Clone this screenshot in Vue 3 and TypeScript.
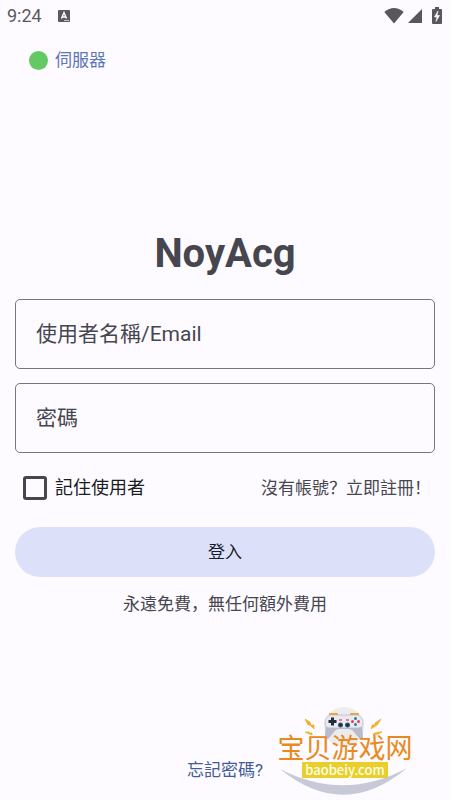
<script setup lang="ts">
import { ref } from 'vue'

const username = ref('')
const password = ref('')
const remember = ref(false)
</script>

<template>
  <div class="screen" lang="zh-Hans">
    <div class="status">
      <span class="clock">9:24</span>
      <svg class="app-badge" viewBox="0 0 12 12" width="12" height="12" aria-hidden="true">
        <rect width="12" height="12" rx="1" fill="#5b595d" />
        <path d="M3.5 8.5 6 2.5l2.5 6M4.5 7h3" fill="none" stroke="#fff" stroke-width="1.4" />
        <path d="M6 10.5h5" stroke="#c9c7cb" stroke-width="1" />
      </svg>
      <div class="signals">
        <svg viewBox="0 0 20 16" width="20" height="16" aria-hidden="true">
          <path d="M0.3 4Q10-4 19.7 4L10 15.5Z" fill="#59575b" />
        </svg>
        <svg viewBox="0 0 16 16" width="16" height="16" aria-hidden="true">
          <path d="M15 1v14H1Z" fill="#59575b" />
        </svg>
        <svg class="battery" viewBox="0 0 10 17" width="10" height="17" aria-hidden="true">
          <path d="M3 0h4v2h2q1 0 1 1v13q0 1-1 1H1q-1 0-1-1V3q0-1 1-1h2Z" fill="#59575b" />
          <path d="M6 4 2.500 10H5l-1 4.500L7.500 8.500H5Z" fill="#fff" stroke="#fff" stroke-width=".6" />
        </svg>
      </div>
    </div>

    <button class="server" type="button"><span class="dot"></span>伺服器</button>

    <form class="login" @submit.prevent>
      <h1>NoyAcg</h1>
      <input v-model="username" class="field" type="text" placeholder="使用者名稱/Email" aria-label="使用者名稱/Email" />
      <input v-model="password" class="field" type="password" placeholder="密碼" aria-label="密碼" />
      <div class="options">
        <label class="remember"><input v-model="remember" type="checkbox" />記住使用者</label>
        <a class="register" href="#register">沒有帳號？立即註冊！</a>
      </div>
      <button class="submit" type="submit">登入</button>
      <p class="note">永遠免費，無任何額外費用</p>
    </form>

    <a class="forgot" href="#forgot">忘記密碼?</a>

    <div class="watermark">
      <svg class="emblem" viewBox="0 0 140 94" width="140" height="94" aria-hidden="true">
        <circle cx="69" cy="21" r="20" fill="#ececef" />
        <path d="M5 63Q69 115 132 62Q69 96 5 63Z" fill="#c8c9d7" />
        <path d="M54 9V8q0-1 1-1h7q1 0 1 1v1ZM75 9V8q0-1 1-1h7q1 0 1 1v1Z" fill="#efa51f" />
        <path d="M51 18Q50 29 50 31Q50 33 53 33Q56 30 59 26Q61 23 64 23H74Q77 23 79 26Q82 30 85 33Q88 33 88 31L87 18Z" fill="#b9bacb" />
        <path d="M55 9H83Q88 11 88 17Q88 22 83 22H55Q50 22 50 17Q50 11 55 9Z" fill="#e9e9ef" stroke="#b9bacb" stroke-width=".8" />
        <path d="M56 11.500h3v2.500h2.500v3H59v2.500h-3V17h-2.500v-3H56Z" fill="#252d3b" />
        <circle cx="65.500" cy="19" r="2.500" fill="#34566a" />
        <circle cx="72.500" cy="19" r="2.500" fill="#34566a" />
        <circle cx="65.500" cy="19" r="1.300" fill="#18283a" />
        <circle cx="72.500" cy="19" r="1.300" fill="#18283a" />
        <path d="M64 14h3M71 14h3" stroke="#e55c7e" stroke-width="1.500" />
        <circle cx="80.500" cy="12.500" r="1.500" fill="#287f9b" />
        <circle cx="77.500" cy="15.500" r="1.500" fill="#df4157" />
        <circle cx="83.500" cy="15.500" r="1.500" fill="#df4157" />
        <circle cx="80.500" cy="18.500" r="1.500" fill="#287f9b" />
        <path d="M30 13l5 3 1 3 3 0 0 4-4-4-2 0ZM106 13l-6 4 0 2-3 0-1 4 6-4 1-1ZM30 26l4 0 1 1 2 0 0 2-5-2ZM107 26l-4 0-2 1-2 0-1 2 5-1Z" fill="#f3b321" stroke="#eda723" stroke-width=".6" />
      </svg>
      <div class="site">宝贝游戏网</div>
      <div class="domain">baobeiy.com</div>
    </div>
  </div>
</template>

<style>
body {
  background: #fdfbff;
}
</style>

<style scoped>
.screen {
  position: relative;
  display: flex;
  flex-direction: column;
  box-sizing: border-box;
  min-height: 100vh;
  padding: 0 15px 16px;
  overflow: hidden;
  color: #46464f;
  background: #fdfbff;
  font: 17px/28px Roboto, "Noto Sans CJK SC", sans-serif;
}

button,
input {
  margin: 0;
  font: inherit;
}

a {
  color: inherit;
  text-decoration: none;
}

.status {
  display: flex;
  align-items: center;
  height: 31px;
  margin: 0 -8px;
  color: #5b595d;
  font-size: 18px;
}

.app-badge {
  margin-left: 16px;
}

.signals {
  display: flex;
  align-items: center;
  gap: 3px;
  margin-left: auto;
}

.battery {
  margin: 0 1px 0 6px;
}

.server {
  display: flex;
  align-items: center;
  align-self: flex-start;
  gap: 7px;
  margin: 15px 0 0 14px;
  padding: 0;
  border: 0;
  color: #5d76b4;
  background: none;
}

.dot {
  width: 19px;
  height: 19px;
  border-radius: 50%;
  background: #62c964;
}

.login {
  display: flex;
  flex-direction: column;
  margin-top: 156px;
}

h1 {
  margin: 0 0 21px;
  font-size: 40px;
  line-height: 48px;
  text-align: center;
}

.field {
  box-sizing: border-box;
  width: 100%;
  height: 70px;
  margin-bottom: 14px;
  padding: 0 20px;
  border: 1px solid #777680;
  border-radius: 5px;
  outline: 0;
  color: #46464f;
  background: transparent;
  font-size: 21px;
}

.field::placeholder {
  color: #46464f;
  opacity: 1;
}

.options {
  display: flex;
  align-items: center;
  justify-content: space-between;
  height: 42px;
  padding: 0 4px 0 8px;
}

.remember {
  display: flex;
  align-items: center;
  gap: 8px;
  color: #1b1b1f;
  font-size: 18px;
}

.remember input {
  appearance: none;
  width: 24px;
  height: 24px;
  border: 3px solid #46464f;
  border-radius: 3px;
}

.remember input:checked {
  background: #46464f;
}

.submit {
  height: 50px;
  margin-top: 18px;
  padding: 0;
  border: 0;
  border-radius: 25px;
  color: #151b2c;
  background: #dce1f9;
}

.note {
  margin: 13px 0 0;
  text-align: center;
}

.forgot {
  align-self: center;
  margin-top: auto;
  color: #425b99;
}

.watermark {
  position: absolute;
  right: 35px;
  bottom: 0;
  display: grid;
  grid-template-rows: 28px 28px 16px 22px;
  justify-items: center;
  width: 140px;
  font-family: "Noto Sans CJK SC", sans-serif;
  pointer-events: none;
}

.emblem {
  grid-area: 1 / 1 / 5 / 2;
}

.site {
  grid-area: 2 / 1;
  color: #e88a20;
  font-size: 27px;
  line-height: 26px;
  white-space: nowrap;
}

.domain {
  grid-area: 3 / 1;
  padding: 0 3px;
  color: #fffde8;
  background: #e9cf2b;
  font-size: 13px;
  font-weight: 500;
  line-height: 16px;
}
</style>
